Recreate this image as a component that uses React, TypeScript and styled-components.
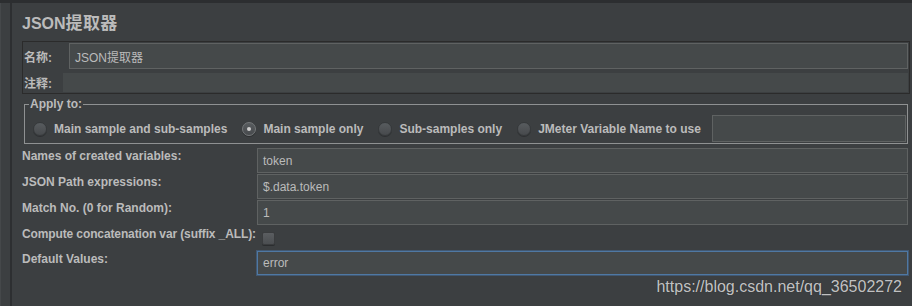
import React from "react";
import styled, { createGlobalStyle } from "styled-components";

const Global = createGlobalStyle`
  html, body { margin: 0; padding: 0; background: #3c3f41; }
  body { font-family: "Liberation Sans", "Noto Sans CJK SC", sans-serif; color: #bbbbbb; }
  * { box-sizing: border-box; }
`;

const Frame = styled.div`
  width: 912px;
  height: 306px;
  display: flex;
  background: #3c3f41;
  border-top: 3px solid #2c2e30;
  overflow: hidden;
`;

const SideStrip = styled.div`
  width: 12px;
  flex: none;
  border-left: 1px solid #45484a;
  border-right: 2px solid #2d2f31;
`;

const Panel = styled.div`
  flex: 1;
  position: relative;
  padding: 0 2px 0 10px;
  display: flex;
  flex-direction: column;
`;

const Title = styled.div`
  margin-top: 11px;
  height: 20px;
  line-height: 20px;
  font-size: 16px;
  font-weight: bold;
  color: #bbbbbb;
  white-space: nowrap;
`;

const TitleCjk = styled.span`
  font-size: 17px;
  letter-spacing: 0.3px;
`;

const NameBox = styled.div`
  margin-top: 7px;
  border: 1px solid #2b2b2b;
  padding: 1px;
  display: flex;
  flex-direction: column;
  gap: 4px;
`;

const NameRow = styled.div`
  display: flex;
  align-items: center;
`;

const FieldLabel = styled.span<{ $w: number }>`
  width: ${(p) => p.$w}px;
  flex: none;
  font-size: 12px;
  font-weight: bold;
  color: #bbbbbb;
  white-space: nowrap;
`;

const TextField = styled.div<{ $h: number; $focus?: boolean }>`
  flex: 1;
  height: ${(p) => p.$h}px;
  background: #45494a;
  border: 1px solid ${(p) => (p.$focus ? "#4f78a3" : "#5f6262")};
  box-shadow: ${(p) => (p.$focus ? "0 0 0 1px rgba(70,110,155,0.55)" : "none")};
  padding-left: 5px;
  display: flex;
  align-items: center;
  font-size: 12px;
  color: #bbbbbb;
  white-space: nowrap;
`;

const CommentField = styled.div`
  flex: 1;
  height: 19px;
  background: #45494a;
`;

const ApplyFieldset = styled.fieldset`
  margin: 3px 2px 0 2px;
  padding: 4px 1px 1px 4px;
  border: 1px solid #8f9192;
  min-width: 0;
`;

const Legend = styled.legend`
  padding: 0 1px;
  line-height: 14px;
  font-size: 12px;
  font-weight: bold;
  color: #bbbbbb;
`;

const RadioRow = styled.div`
  height: 27px;
  display: flex;
  align-items: center;
  padding-left: 4px;
`;

const RadioItem = styled.label`
  display: flex;
  align-items: center;
  gap: 8px;
  margin-right: 15px;
  font-size: 12px;
  font-weight: bold;
  color: #bbbbbb;
  white-space: nowrap;
`;

const RadioDot = styled.span<{ $on?: boolean }>`
  width: 14px;
  height: 14px;
  margin: 0 -0.5px;
  border-radius: 50%;
  flex: none;
  position: relative;
  background: linear-gradient(#585c5f, #474a4d);
  border: 1px solid ${(p) => (p.$on ? "#75787a" : "#36393b")};
  box-shadow: 0 1px 0 #2e3032;
  &::after {
    content: "";
    display: ${(p) => (p.$on ? "block" : "none")};
    position: absolute;
    left: 50%;
    top: 50%;
    width: 4px;
    height: 4px;
    margin: -2px 0 0 -2px;
    border-radius: 50%;
    background: #cfcfcf;
  }
`;

const VarNameField = styled.div`
  flex: 1;
  height: 27px;
  margin-left: -4px;
  background: #45494a;
  border: 1px solid #5f6262;
`;

const FormGrid = styled.div`
  margin-top: 4px;
  display: grid;
  grid-template-columns: 235px 1fr;
  grid-template-rows: 25px 25px 25px 24px 24px;
  row-gap: 1px;
  padding-right: 2px;
`;

const RowLabel = styled.div<{ $tight?: boolean }>`
  padding-top: 1px;
  line-height: 15px;
  font-size: 12px;
  font-weight: bold;
  color: #bbbbbb;
  white-space: nowrap;
  letter-spacing: ${(p) => (p.$tight ? "-0.12px" : "0")};
`;

const CheckCell = styled.div`
  display: flex;
  align-items: center;
  padding-left: 5px;
`;

const CheckBox = styled.span`
  width: 13px;
  height: 13px;
  border-radius: 2px;
  background: linear-gradient(#5b5e61, #4b4e51);
  border: 1px solid #3a3c3e;
  box-shadow: 0 1px 0 #2b2d2f;
`;

const Watermark = styled.div`
  position: absolute;
  right: 10px;
  bottom: 10px;
  font-size: 16px;
  line-height: 18px;
  color: rgba(214, 214, 214, 0.9);
  text-shadow: 0 0 1px rgba(0, 0, 0, 0.35);
`;

const radios = [
  { label: "Main sample and sub-samples", on: false },
  { label: "Main sample only", on: true },
  { label: "Sub-samples only", on: false },
  { label: "JMeter Variable Name to use", on: false },
];

export default function App() {
  return (
    <>
      <Global />
      <Frame>
        <SideStrip />
        <Panel>
          <Title>
            JSON<TitleCjk>提取器</TitleCjk>
          </Title>
          <NameBox>
            <NameRow>
              <FieldLabel $w={45}>名称:</FieldLabel>
              <TextField $h={26}>JSON提取器</TextField>
            </NameRow>
            <NameRow>
              <FieldLabel $w={39}>注释:</FieldLabel>
              <CommentField />
            </NameRow>
          </NameBox>
          <ApplyFieldset>
            <Legend>Apply to:</Legend>
            <RadioRow>
              {radios.map((r) => (
                <RadioItem key={r.label}>
                  <RadioDot $on={r.on} />
                  {r.label}
                </RadioItem>
              ))}
              <VarNameField />
            </RadioRow>
          </ApplyFieldset>
          <FormGrid>
            <RowLabel>Names of created variables:</RowLabel>
            <TextField $h={25}>token</TextField>
            <RowLabel>JSON Path expressions:</RowLabel>
            <TextField $h={25}>$.data.token</TextField>
            <RowLabel>Match No. (0 for Random):</RowLabel>
            <TextField $h={25}>1</TextField>
            <RowLabel $tight>Compute concatenation var (suffix _ALL):</RowLabel>
            <CheckCell>
              <CheckBox />
            </CheckCell>
            <RowLabel>Default Values:</RowLabel>
            <TextField $h={24} $focus>
              error
            </TextField>
          </FormGrid>
          <Watermark>https://blog.csdn.net/qq_36502272</Watermark>
        </Panel>
      </Frame>
    </>
  );
}
